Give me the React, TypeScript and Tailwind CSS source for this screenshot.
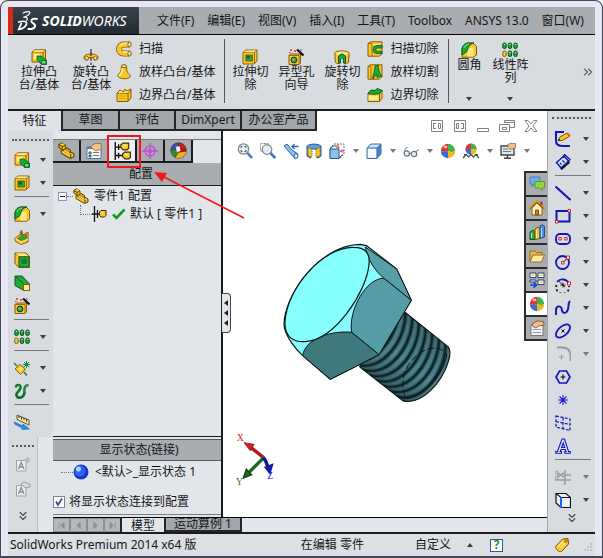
import React from 'react';
import { ChevronsDown, ChevronsRight } from 'lucide-react';

const G = '#1fa83c';
const Y = '#f6c928';
const YD = '#8a5a06';
const YL = '#fde98a';
const B = '#1414b8';

const icons: Record<string, React.ReactNode> = {
  extrude: (
    <>
      <path d="M1 3L4 .8H14.500V10L12 13H1Z" fill={Y} stroke={YD} />
      <path d="M1 3H12V13M12 3L14.500 1" fill="none" stroke={YD} />
      <path d="M1.500 3L4 1.300H14L12 3Z" fill={YL} />
      <path d="M3 5H9V10H3Z" fill={YL} />
      <path d="M6 7H10L15.500 11V15.500H10.500L6 11Z" fill={G} stroke="#0b5a1c" strokeWidth=".8" />
      <path d="M10.500 11.500H15V15H10.500Z" fill="#5fe070" stroke="#0b5a1c" strokeWidth=".8" />
    </>
  ),
  cut: (
    <>
      <path d="M1 3.500L4 1H15V12L12 15H1Z" fill={Y} stroke={YD} />
      <path d="M1 3.500H12.500V15M12.500 3.500L15 1" fill="none" stroke={YD} strokeWidth=".8" />
      <path d="M1.600 3.300L4 1.500H14L12 3.300Z" fill={YL} />
      <path d="M4 6H10.500V12H4Z" fill={G} stroke={YD} strokeWidth="1.200" />
      <path d="M4.500 6.500H8V9.500H4.500Z" fill="#0c6b22" />
    </>
  ),
  revolve: (
    <>
      <path d="M8 0V16" stroke="#111" strokeDasharray="3 1.500" />
      <path d="M1.500 10C-.5 7 3 5 8 5S16.500 7 14.500 10C13 12.500 9.500 11 10.500 8.500H5.500C6.500 11 3 12.500 1.500 10Z" fill={Y} stroke={YD} />
      <ellipse cx="3.700" cy="9" rx="1.700" ry="1.800" fill={YL} stroke={YD} strokeWidth=".8" />
      <ellipse cx="12.300" cy="9" rx="1.700" ry="1.800" fill={YL} stroke={YD} strokeWidth=".8" />
      <path d="M8 3V7" stroke="#111" />
    </>
  ),
  sweep: (
    <>
      <path d="M13.500 3.500H7.500A4.500 4.500 0 0 0 7.500 12.500H13.500" fill="none" stroke={YD} strokeWidth="6" />
      <path d="M13 3.500H7.500A4.500 4.500 0 0 0 7.500 12.500H13" fill="none" stroke={Y} strokeWidth="4.400" />
      <path d="M12.500 2.500H7.500A5 5 0 0 0 4 5M7 11H12" fill="none" stroke={YL} strokeWidth="1.300" />
      <ellipse cx="13.500" cy="3.500" rx="1.700" ry="2.500" fill={YL} stroke={YD} />
      <ellipse cx="13.500" cy="12.500" rx="1.700" ry="2.500" fill={YL} stroke={YD} />
    </>
  ),
  loft: (
    <>
      <path d="M5.500 2.500C5.500 7 4 9 1.500 11.500C2 15 14 16.500 14.500 11.500C11 9 10.500 6 10.500 2.500Z" fill={Y} stroke={YD} />
      <path d="M6.500 4C6.500 8 5 10 3.500 12" fill="none" stroke={YL} strokeWidth="2" />
      <ellipse cx="8" cy="2.200" rx="2.500" ry="1.500" fill={YL} stroke={YD} />
    </>
  ),
  boundary: (
    <>
      <path d="M1 6L4 3L7 5L9 2L11 4L15 2V11L12 14.500H1Z" fill={Y} stroke={YD} />
      <path d="M1 6C4 8 7 5 12 6.500V14.500M12 6.500L15 3" fill="none" stroke={YD} />
      <path d="M2 6L4.500 4L7.500 5.500L11 4.500L13.500 4L11.500 6C8 5 5 7 2 6Z" fill={YL} />
      <path d="M3 9H10M3 11.500H10" stroke="#d79a10" />
    </>
  ),
  hole: (
    <>
      <path d="M1 6.500L2.500 5H12.500V14L11 15.500H1Z" fill={Y} stroke={YD} />
      <path d="M1 6.500H11V15.500" fill="none" stroke={YD} strokeWidth=".8" />
      <circle cx="6" cy="11" r="2.900" fill={G} stroke="#2b2b2b" />
      <circle cx="5.500" cy="10.500" r="1" fill="#9af09a" />
      <path d="M9 .5L15.500 6.500" stroke="#111" strokeWidth="2.200" />
      <path d="M2 1H4M3 0V2M6 2H8M7 1V3M12 1H14M1 3.500H2.500" stroke="#d33" />
    </>
  ),
  revcut: (
    <>
      <path d="M.8 4.500C1 1 15 1 15.200 4.500L14.500 13C13.500 15 11 15 10.500 14.500V9L8 7L5.500 9V14.500C3 15 1.500 14 1.300 13Z" fill={Y} stroke={YD} />
      <path d="M1.500 4.500C2 2 14 2 14.500 4.500L11 6.500L8 5L5 6.500Z" fill={YL} />
      <path d="M4.500 7L8 4.800L11.500 7V14H9.500V10L8 8.800L6.500 10V14H4.500Z" fill={G} stroke="#0b5a1c" />
    </>
  ),
  sweepcut: (
    <>
      <path d="M1 2.500L4 .8H15V13L12 15.200H1Z" fill={Y} stroke={YD} />
      <path d="M1 2.500H5V15" fill="none" stroke={YD} strokeWidth=".8" />
      <path d="M6 3H13V4H6Z" fill={YL} />
      <path d="M15 4.500H10A3.500 3.500 0 0 0 10 12.500H15V10.300H10.500A1.300 1.300 0 0 1 10.500 7H15Z" fill={G} stroke="#0b5a1c" strokeWidth=".8" />
    </>
  ),
  loftcut: (
    <>
      <path d="M1 2.500L3 .8H15V13L12 15.200H1Z" fill={Y} stroke={YD} />
      <path d="M4 2.500V15M1 2.500H4" fill="none" stroke={YD} strokeWidth=".8" />
      <path d="M8 1.500H11.500C11.500 7 13 10 15 12L10 13.500L9.500 10L6 15C5 13 8 8 8 1.500Z" fill={G} stroke="#0b5a1c" strokeWidth=".8" />
    </>
  ),
  boundcut: (
    <>
      <path d="M1 6L4 3.500H15V11.500L12.500 14.500H1Z" fill={Y} stroke={YD} />
      <path d="M1 6.500H12.500V14.500" fill="none" stroke={YD} />
      <path d="M1.500 8.500H11.500V13.500H1.500Z" fill={YL} />
      <path d="M1 6.500C4 7.500 9 7.500 12.500 6.500L15.500 3.500L10 1.500L8 3.500L4 3Z" fill={G} stroke="#0b5a1c" />
    </>
  ),
  fillet: (
    <>
      <path d="M1 6L6 1H12L15.500 4.500V13L12.500 15.200H1Z" fill={Y} stroke={YD} />
      <path d="M1 8C1 3 4 1 8 1H13C9 2 6.500 5 6.500 9L1 13Z" fill={G} stroke="#0b5a1c" />
      <path d="M6.500 14.500V9.500C7 6.500 9 5.500 12.500 5.500V14.500Z" fill={YL} />
      <path d="M3 6C4 3.500 5.500 2.500 8 2" stroke="#7cf08a" fill="none" />
    </>
  ),
  pattern: (
    <>
      {[2.500, 8, 13.500].map((x) => (
        <g key={x}>
          <rect x={x - 1.700} y="1" width="3.400" height="5.500" rx="1.500" fill={G} stroke="#0a4c18" />
          <rect
            x={x - 1.700}
            y="9"
            width="3.400"
            height="5.500"
            rx="1.500"
            fill={x < 3 ? Y : G}
            stroke={x < 3 ? YD : '#0a4c18'}
          />
          <path d={`M${x - 0.7} 2.500H${x + 0.7}M${x - 0.7} 10.500H${x + 0.7}`} stroke="#a9f5ae" />
        </g>
      ))}
    </>
  ),
  rib: (
    <>
      <path d="M1 9L5.500 6L7.500 1L9 6L14 3V13L7 15.500L1 12Z" fill={Y} stroke={YD} />
      <path d="M7.500 2.500L9 7L12.500 5.500V9.500L8 12L3.500 9.500L6.500 7.500Z" fill={G} stroke={YD} strokeWidth=".8" />
      <path d="M1.500 9.500L7 12.800L14 10M7 12.800V15" stroke={YL} fill="none" />
    </>
  ),
  shell: (
    <>
      <path d="M1 1H12L15.500 4.500V15.500H5L1 11.500Z" fill={Y} stroke={YD} />
      <path d="M1 1L5 4.500H15.500M5 4.500V15.500" stroke={YD} fill="none" strokeWidth=".8" />
      <path d="M5 5H15V15H5Z" fill={G} stroke="#0b5a1c" strokeWidth=".8" />
      <path d="M7.500 7H13V12H7.500Z" fill="#0c7f28" />
      <path d="M2 1.500H11.500L14 4H5Z" fill={YL} />
    </>
  ),
  draft: (
    <>
      <path d="M1 1H8L15.500 9V15.500H10L1 10.500Z" fill={G} stroke="#0b5a1c" />
      <path d="M1 1L10 9.500H15.500M10 9.500V15" stroke="#0b5a1c" fill="none" />
      <path d="M9.500 9.500H15.500V15.500H9.500Z" fill={YL} stroke={YD} />
    </>
  ),
  refgeo: (
    <>
      <path d="M1 9L6 4.500L11.500 9L6.500 14.500Z" fill={Y} stroke={YD} />
      <path d="M4 9H9M6.500 6.500V12" stroke={YL} />
      <path d="M0 3L3 6M10 12L13 15.500" stroke="#178a2c" strokeWidth="1.500" />
      <path d="M12.500 1V8M9 4.500H16M10 2L15 7M15 2L10 7" stroke="#178a2c" />
    </>
  ),
  curve: (
    <>
      <path d="M2 4.500C2 1 7 1 6.500 5C6 8 1.500 9.500 2.500 12.500C4 16.500 10 15 10.500 9.500C10.500 6 10 2.500 14.500 2" stroke="#126e30" strokeWidth="2.600" fill="none" />
      <path d="M3 4C4 2 6 3 5.500 5M11 9C11 5 11.500 3 14 2" stroke="#5cc06c" fill="none" strokeWidth=".8" />
    </>
  ),
  measure: (
    <>
      <path d="M3 1L15 6V11L3 5.500Z" fill={YL} stroke="#555" />
      <path d="M5 2V4M7.500 3V5.500M10 4V6M12.500 5V7.500" stroke="#333" />
      <path d="M.5 8L9 12V10L15.500 15L8 15.500V14L.5 10Z" fill="#2a8fe8" stroke="#1763ad" strokeWidth=".6" />
    </>
  ),
  noteA: (
    <>
      <path d="M1.500 4.500H11V15H1.500Z" fill="#eee" stroke="#9da0a4" />
      <path d="M3.500 13L6.200 6.500L9 13M4.500 11H8" stroke="#8b8e92" strokeWidth="1.300" fill="none" />
      <path d="M12.500 1V7M9.500 4H15.500M10.500 2L14.500 6M14.500 2L10.500 6" stroke="#b0b3b6" />
    </>
  ),
  noteB: (
    <>
      <path d="M1.500 4.500H11V15H1.500Z" fill="#eee" stroke="#9da0a4" />
      <path d="M3.500 13L6.200 6.500L9 13M4.500 11H8" stroke="#8b8e92" strokeWidth="1.300" fill="none" />
      <path d="M6 3L9 1L15 3V6L10 7Z" fill="#d5d5d5" stroke="#9da0a4" />
    </>
  ),
  part: (
    <>
      <path d="M.8 2.500L3.500 .8L7 3V6.500L15 11V14L11.500 15.500L3 10.500V6.500L.8 5Z" fill={Y} stroke="#5d4300" />
      <path d="M4 8L8.500 5.500L11.500 7.500V10.500" fill="#d89b0a" stroke="#5d4300" />
      <path d="M1 2.500L4 4.500V7.500L12 12V15M4 4.500L6.500 3" stroke="#5d4300" fill="none" />
      <path d="M4 1.500L6 3M5.500 8L11.500 11.500" stroke={YL} />
    </>
  ),
  property: (
    <>
      <path d="M1 4H15V15.500H1Z" fill="#f6f8fb" stroke="#5673a8" />
      <path d="M1 4H15V6H1Z" fill="#4a78c8" />
      <path d="M3 9H5V11H3ZM3 12.500H5V14H3Z" fill="none" stroke="#355" />
      <path d="M7 9.500H13M7 12.500H13" stroke="#778" />
      <path d="M5 3L9 .5H15L15.500 6L10 8L6 5.500Z" fill="#f1c08c" stroke="#8a5a2c" strokeWidth=".7" />
    </>
  ),
  config: (
    <>
      <path d="M2 0V16M2 4.500H8M2 12H8M5 2V7M5 9.500V14.500" stroke="#111" strokeWidth="1.200" />
      <path d="M7 2.500L9 1H14V5.500L12.500 7H9L7 5Z" fill={Y} stroke="#3d2d00" />
      <path d="M8.500 10.500L10.500 9H15.500V13.500L14 15H10.500L8.500 13Z" fill={Y} stroke="#3d2d00" />
      <path d="M9 3H12M10.500 11H13" stroke={YL} strokeWidth="1.500" />
    </>
  ),
  target: (
    <>
      <circle cx="8" cy="8" r="5" fill="none" stroke="#c44bd6" strokeWidth="1.400" />
      <circle cx="8" cy="8" r="2" fill="none" stroke="#c44bd6" />
      <path d="M8 0V16M0 8H16" stroke="#c44bd6" strokeWidth="1.300" />
    </>
  ),
  ball: (
    <>
      <circle cx="8" cy="8" r="7.200" fill="#f2f2f2" />
      <path d="M8 8V.8A7.200 7.200 0 0 0 .8 8C3 9.500 6 9 8 8Z" fill="#e5342b" />
      <path d="M8 8V.8A7.200 7.200 0 0 1 15.200 8C13 9.500 10 9 8 8Z" fill="#3cb54a" />
      <path d="M8 8C6 9 3 9.500 .8 8A7.200 7.200 0 0 0 8 15.200Z" fill="#2e6fd8" />
      <path d="M8 8C10 9 13 9.500 15.200 8A7.200 7.200 0 0 1 8 15.200Z" fill="#f2b91d" />
      <ellipse cx="5.500" cy="4" rx="2" ry="1.400" fill="#fff" opacity=".65" />
    </>
  ),
  ballDark: (
    <>
      <circle cx="8" cy="8" r="7.300" fill="#a61414" stroke="#333" strokeWidth=".7" />
      <path d="M1 7A7 7 0 0 1 8 1L7 6Z" fill="#2356c6" />
      <path d="M8 1A7.200 7.200 0 0 1 15 7L9 6Z" fill="#c81e1e" />
      <path d="M.8 8L7 7L8 10L4 14A7 7 0 0 1 .8 8Z" fill="#2c8f3c" />
      <path d="M8 10L15.200 9A7.200 7.200 0 0 1 5 14.500Z" fill="#e6b41f" />
      <path d="M5.500 4.500L9 4L10 8.500L6.500 9.500Z" fill="#f5f5f5" />
    </>
  ),
  zoomFit: (
    <>
      <circle cx="6.500" cy="6" r="5.200" fill="#e6ecf2" stroke="#7d8894" strokeWidth="1.300" />
      <path d="M4 5V3.500H5.500M7.500 3.500H9V5M9 7V8.500H7.500M5.500 8.500H4V7" stroke="#4b5661" fill="none" />
      <path d="M10.500 10L15 15" stroke="#3c79c4" strokeWidth="2.600" />
    </>
  ),
  zoomArea: (
    <>
      <path d="M.5 .5H8V8H.5Z" fill="none" stroke="#888" strokeDasharray="2 1" />
      <circle cx="7" cy="6.500" r="4.800" fill="#e6ecf2" fillOpacity=".8" stroke="#7d8894" strokeWidth="1.200" />
      <path d="M10.500 10L15.200 15" stroke="#3c79c4" strokeWidth="2.600" />
    </>
  ),
  prevView: (
    <>
      <path d="M1 3L4 1L9 7L15 11L12 15.500L7 10Z" fill="#8dbfe8" stroke="#2c69a8" />
      <ellipse cx="13" cy="13" rx="2" ry="2.500" fill="#c9e4f8" stroke="#2c69a8" />
      <path d="M15.500 3.500H9M11.500 1L9 3.500L11.500 6" stroke="#2668c4" strokeWidth="1.300" fill="none" />
    </>
  ),
  section: (
    <>
      <path d="M1 3C4 .5 12 .5 15 3V13L11.500 15V6H4.500V15L1 13Z" fill="#5f9fe0" stroke="#24588f" />
      <path d="M2 4.500L6 6.500V14.500L2 12.500ZM10 6.500L14 4.500V12.500L10 14.500Z" fill={Y} stroke="#7a6200" strokeDasharray="1 1" />
    </>
  ),
  orient: (
    <>
      <path d="M5 1H15V11L11 15H1V5Z" fill="#fff" stroke="#777" strokeDasharray="2 1" />
      <path d="M1 6H10V15.500H1Z" fill="#8cc0ee" stroke="#24588f" />
      <path d="M1 6L4 3H8M10 15L13.500 11.500" fill="none" stroke="#24588f" />
      <path d="M9 1V5M7.500 4L9 5.500L10.500 4M15 8H12M13 6.500L11.500 8L13 9.500" stroke="#d22" fill="none" />
    </>
  ),
  display: (
    <>
      <path d="M1 5L5 1H15V11L11 15.500H1Z" fill="#cfe2f6" stroke="#3d6ea8" />
      <path d="M11 5L15 1V11L11 15Z" fill="#3f7fd0" />
      <path d="M2 6H10V14.500H2Z" fill="#f4f8fc" />
      <path d="M1 5H11V15.500M11 5L15 1" fill="none" stroke="#3d6ea8" />
    </>
  ),
  glasses: (
    <>
      <circle cx="3.800" cy="10.500" r="2.700" fill="#e6f0f6" stroke="#66727c" strokeWidth="1.200" />
      <circle cx="11" cy="11" r="2.700" fill="#e6f0f6" stroke="#66727c" strokeWidth="1.200" />
      <path d="M1.200 10C1.500 6 3 4.500 4.500 4.500M6.500 10.500H8.300M13.500 10C13.500 7 14.500 6.500 16 7.500" stroke="#66727c" fill="none" />
    </>
  ),
  scene: (
    <>
      <circle cx="8" cy="6" r="5.500" fill="#e5342b" />
      <path d="M8 .5A5.500 5.500 0 0 1 13.500 6H8Z" fill="#3cb54a" />
      <path d="M8 6H13.500A5.500 5.500 0 0 1 8 11.500Z" fill="#f2b91d" />
      <path d="M8 6V11.500A5.500 5.500 0 0 1 2.500 6Z" fill="#2e6fd8" />
      <path d="M0 15L3 11.500L5.500 14L8 11.500L10.500 14L13 11.500L16 15M1 11.500H4M12 11.500H15" stroke="#444" strokeWidth="1.200" fill="none" />
    </>
  ),
  screen: (
    <>
      <path d="M1 3H14V12H1Z" fill="#dfe8ee" stroke="#444" strokeWidth="1.400" />
      <path d="M3 6H8M3 8.500H11" stroke="#6d7b86" />
      <path d="M4 15.300H11M7.500 12V15" stroke="#444" strokeWidth="1.500" />
      <path d="M7 2L10 .5H15.500V5L10 6.500Z" fill="#f1c08c" stroke="#8a5a2c" strokeWidth=".7" />
    </>
  ),
  chat: (
    <>
      <path d="M1 1H11V8H5L3 10.500V8H1Z" fill="#69aee6" stroke="#4682b8" />
      <path d="M6 5.500H15.500V12H13V14.500L10.500 12H6Z" fill="#8fd44a" stroke="#5a9d26" />
    </>
  ),
  home: (
    <>
      <path d="M3 8V15H13V8L8 3Z" fill="#fff4c8" stroke="#8a5a06" />
      <path d="M.5 8.500L8 1L15.500 8.500" stroke="#d79a10" strokeWidth="2" fill="none" />
      <path d="M.5 9.500L8 2.200L15.500 9.500" stroke="#8a4a06" fill="none" strokeWidth=".7" />
      <path d="M12.500 1.500V5" stroke="#b3261a" strokeWidth="2" />
      <path d="M6.500 10H9.500V15H6.500Z" fill="#c97a22" stroke="#8a4a06" />
    </>
  ),
  library: (
    <>
      <path d="M1 8L4 6L6 8V15.500H1Z" fill="#2fa64a" stroke="#0b5a1c" />
      <path d="M6 5L9 3L11 5V14.500L6 15.500Z" fill="#f2c433" stroke="#7a5a00" />
      <path d="M11 2L13.500 .8L15.500 2.500V13L11 14.500Z" fill="#4a90e0" stroke="#1a4e90" />
      <path d="M2.500 9V14M7.500 6V14M12.500 4V13" stroke="#fff" opacity=".7" />
    </>
  ),
  folder: (
    <>
      <path d="M1 13V3H6L7.500 4.500H13V7" fill="#e8bb4e" stroke="#9a6c10" />
      <path d="M1 14L4 7H15.500L12.500 14Z" fill="#fde9a6" stroke="#9a6c10" />
    </>
  ),
  palette: (
    <>
      <path d="M1 1H7V5.500H1ZM9 1H15V5.500H9ZM9 8H15V12.500H9ZM1 8H7V10H1Z" fill="#fff" stroke="#28406e" />
      <path d="M2.500 3.300H5.500M10.500 3.300H13.500M10.500 10.300H13.500" stroke={Y} strokeWidth="1.600" />
      <path d="M1 13H7M4.500 10.500L7.500 13L4.500 15.500" stroke="#1645c8" strokeWidth="1.600" fill="none" />
    </>
  ),
  custom: (
    <>
      <path d="M2 5H14V15.500H2Z" fill="#f4f4f4" stroke="#777" />
      <path d="M4 9.500H12M4 12.500H12" stroke="#999" />
      <path d="M3 4L8 1L14.500 1.500L15 5L10 6L7 8L4 6.500Z" fill="#f1c08c" stroke="#7a4a1c" strokeWidth=".8" />
    </>
  ),
  sketch: (
    <>
      <path d="M9 1H1V10C1 14 4 15 8 15H15" stroke={B} strokeWidth="2" fill="none" />
      <path d="M3 9.500L5 6L12 2L14.500 5.500L7 9.500Z" fill={Y} stroke="#8a4a06" />
      <path d="M11.500 2L13 1.500L15.500 4.500L14 6Z" fill="#e0574c" />
      <path d="M3 10L5.500 9.500L4 7.500Z" fill="#222" />
    </>
  ),
  smartdim: (
    <>
      <path d="M1.500 8.500L9 2L13.500 7L6 14Z" fill="#cfe2fa" stroke={B} strokeWidth="1.400" />
      <path d="M8 4L9.500 .5L15 5.500L13 7.500M5 9L6.500 10.500M7.500 6.500L9.500 8.500" stroke={B} strokeWidth="1.300" fill="none" />
      <path d="M6 15.500L14.500 8" stroke="#111" strokeWidth="1.800" />
    </>
  ),
  line: <path d="M.5 1.500L15.500 15" stroke={B} strokeWidth="2" />,
  rect: (
    <>
      <path d="M1.500 3H14.500V13.500H1.500Z" fill="none" stroke={B} strokeWidth="2" />
      <path d="M13 1.500H15.500V4H13ZM.5 12.500H3V15H.5Z" fill="#fff" stroke="#c22" />
    </>
  ),
  slot: (
    <>
      <rect x="1" y="3" width="14" height="10" rx="4" fill="none" stroke={B} strokeWidth="1.800" />
      <path d="M3.800 6.500H6.200V9H3.800ZM9.800 6.500H12.200V9H9.800Z" fill="#fff" stroke="#c22" />
    </>
  ),
  circle: (
    <>
      <circle cx="7.500" cy="8.500" r="6.500" fill="none" stroke={B} strokeWidth="1.800" />
      <path d="M8 8.500L13 3.500" stroke="#111" />
      <path d="M6.500 7.500H9V10H6.500ZM11.500 2H14.500V5H11.500Z" fill="#fff" stroke="#c22" />
    </>
  ),
  arc: (
    <>
      <path d="M2 5A7 7 0 0 1 14 7" fill="none" stroke={B} strokeWidth="1.800" />
      <path d="M1.500 8A6.500 6.500 0 1 0 14 9" fill="none" stroke="#111" strokeWidth="1.800" strokeDasharray="2 2.500" />
      <path d="M4 4.500L10 10M5.500 8H10.500M8 5.500V10.500" stroke="#111" strokeWidth=".9" />
      <path d="M12.500 5H15.500V8H12.500Z" fill="#fff" stroke="#c22" />
    </>
  ),
  spline: <path d="M1 15V10C1 6 6 5 6.500 8.500C7 12.500 9 14 11.500 12C15 9 12 4 15 1" stroke={B} strokeWidth="1.900" fill="none" />,
  ellipse: (
    <>
      <ellipse cx="8" cy="8" rx="8.500" ry="4.600" transform="rotate(-42 8 8)" fill="none" stroke={B} strokeWidth="1.800" />
      <path d="M6.500 6.500L9.500 9.500M9.500 6.500L6.500 9.500" stroke="#111" />
    </>
  ),
  arcGrey: (
    <>
      <path d="M2 1.500H7C13 1.500 15.500 5 15.500 10V15" stroke="#9a9da0" strokeWidth="1.800" fill="none" />
      <path d="M4 11H9M6.500 8.500V13.500" stroke="#9a9da0" />
    </>
  ),
  polygon: (
    <>
      <path d="M4.500 2H11.500L15 8L11.500 14H4.500L1 8Z" fill="none" stroke={B} strokeWidth="1.700" />
      <path d="M5.500 8H10.500M8 5.500V10.500" stroke="#111" strokeWidth="1.200" />
    </>
  ),
  star: <path d="M8 3V13M3 8H13M4.500 4.500L11.500 11.500M11.500 4.500L4.500 11.500" stroke="#1a1adf" strokeWidth="1.100" />,
  plane: <path d="M1 1L15 4V15.500L1 12ZM1 6.500L15 9.500M8 2.500V14" stroke={B} strokeWidth="1.200" strokeDasharray="3 1.500" fill="none" />,
  textA: <path d="M.8 15.200V13.500H2.500L7 1H9.500L13.500 13.500H15.200V15.200H9.800V13.500H11L10.200 11.500H6L5.200 13.500H6.500V15.200ZM6.600 9.500H9.700L8.200 5Z" fill="#dfe4fb" stroke={B} strokeWidth="1.100" />,
  trim: (
    <>
      <path d="M0 11H16M10 1V16M10 6H16M2 4L9 8M2 8L9 4" stroke="#9b9ea1" strokeWidth="1.500" />
      <circle cx="1.800" cy="3.500" r="1.500" fill="none" stroke="#9b9ea1" />
      <circle cx="1.800" cy="8.500" r="1.500" fill="none" stroke="#9b9ea1" />
    </>
  ),
  convert: (
    <>
      <path d="M1 1.500H11L15.500 5.500V15.500H6L1 11Z" fill="#eef1f4" stroke="#111" strokeWidth="1.200" />
      <path d="M1 1.500L6 5.500H15.500" stroke="#111" strokeWidth="1.200" fill="none" />
      <path d="M6 5V16" stroke="#1b62ff" strokeWidth="2" />
    </>
  ),
};

function Icon({ name, size = 16 }: { name: string; size?: number }) {
  return (
    <svg width={size} height={size} viewBox="0 0 16 16" className="shrink-0" aria-hidden="true">
      {icons[name]}
    </svg>
  );
}

function Caret({ up = false, grey = false }: { up?: boolean; grey?: boolean }) {
  return (
    <svg width="6" height="4" viewBox="0 0 6 4" className="shrink-0" aria-hidden="true">
      <path d={up ? 'M0 4L3 0L6 4Z' : 'M0 0H6L3 4Z'} fill={grey ? '#75787c' : '#3c3f42'} />
    </svg>
  );
}

const menus = ['文件(F)', '编辑(E)', '视图(V)', '插入(I)', '工具(T)', 'Toolbox', 'ANSYS 13.0', '窗口(W)'];

function MenuBar() {
  return (
    <header className="flex h-7 items-stretch border-b border-black bg-[#a9adb1]">
      <div className="flex w-[131px] shrink-0 items-center border-l-[5px] border-[#d92a1c] bg-gradient-to-b from-[#3a434c] to-[#222a31] pl-1 text-white">
        <svg width="22" height="22" viewBox="0 0 66 66" fill="none" stroke="#fff" aria-hidden="true">
          <path d="M17 10C26 4 42 2 38 10C35 16 27 20 19 22C31 20 34 25 28 33" strokeWidth="3.500" />
          <path d="M3 37C20 31 32 34 28 43C24 52 14 57 5 58L14 38" strokeWidth="5" />
          <path d="M62 27C50 24 42 28 43 34C44 40 57 42 54 49C51 57 42 58 32 57" strokeWidth="6" />
        </svg>
        <span className="pl-[3px] text-sm leading-4 italic">
          <b>SOLID</b>WORKS
        </span>
      </div>
      <nav className="flex min-w-0 flex-1 items-center justify-between pr-[11px] pl-[18px] whitespace-nowrap">
        {menus.map((m) => (
          <button key={m} type="button">
            {m}
          </button>
        ))}
      </nav>
    </header>
  );
}

function BigButton({ icon, label, width, caret }: { icon: string; label: string; width: string; caret?: boolean }) {
  return (
    <button type="button" className={`flex shrink-0 flex-col items-center ${width} ${caret ? 'pt-[7px]' : 'pt-[14px]'}`}>
      <Icon name={icon} />
      <span className={`w-[42px] leading-[13px] break-all ${caret ? 'h-[39px]' : ''}`}>{label}</span>
      {caret && <Caret />}
    </button>
  );
}

function ButtonStack({ items }: { items: [string, string][] }) {
  return (
    <div className="flex shrink-0 flex-col pt-[2px]">
      {items.map(([icon, label]) => (
        <button key={label} type="button" className="flex h-[23px] items-center gap-[7px] whitespace-nowrap">
          <Icon name={icon} />
          {label}
        </button>
      ))}
    </div>
  );
}

function Ribbon() {
  return (
    <section className="flex h-[76px] border-b-2 border-[#1c1c1e] bg-[#d8dbdf] pl-1">
      <BigButton icon="extrude" label="拉伸凸台/基体" width="w-[54px]" />
      <BigButton icon="revolve" label="旋转凸台/基体" width="w-[50px]" />
      <ButtonStack items={[['sweep', '扫描'], ['loft', '放样凸台/基体'], ['boundary', '边界凸台/基体']]} />
      <div className="mt-1 mr-[2px] ml-[9px] h-16 w-px bg-[#55585c]" />
      <BigButton icon="cut" label="拉伸切除" width="w-[46px]" />
      <BigButton icon="hole" label="异型孔向导" width="w-[46px]" />
      <BigButton icon="revcut" label="旋转切除" width="w-[46px]" />
      <div className="w-[2px]" />
      <ButtonStack items={[['sweepcut', '扫描切除'], ['loftcut', '放样切割'], ['boundcut', '边界切除']]} />
      <div className="mt-1 ml-[10px] h-16 w-px bg-[#55585c]" />
      <BigButton icon="fillet" label="圆角" width="w-[40px]" caret />
      <BigButton icon="pattern" label="线性阵列" width="w-[42px]" caret />
      <button type="button" aria-label="更多" className="ml-auto text-[#55585c]">
        <ChevronsRight size={14} strokeWidth={2} />
      </button>
    </section>
  );
}

const ribbonTabs: [string, string][] = [
  ['特征', 'w-[55px]'],
  ['草图', 'w-[57px]'],
  ['评估', 'w-[56px]'],
  ['DimXpert', 'w-[66px]'],
  ['办公室产品', 'w-[75px]'],
];

function WindowControls() {
  return (
    <div className="flex h-[14px] gap-[9px] text-[#7e8185]">
      {['左', '右'].map((side, i) => (
        <button key={side} type="button" aria-label={`${side}窗格`}>
          <svg width="14" height="14" viewBox="0 0 14 14" fill="none" stroke="currentColor">
            <path d="M1.500 1.500H12.500V12.500H1.500Z" />
            <path d={i ? 'M3.500 4.500H5.500V9.500H3.500ZM8 4.500H10.500M8 9.500H10.500M10.500 4V10' : 'M8.500 4.500H10.500V9.500H8.500ZM3.500 4.500H6M3.500 9.500H6M3.500 4V10'} />
          </svg>
        </button>
      ))}
      <button type="button" aria-label="最小化">
        <svg width="14" height="14" viewBox="0 0 14 14" fill="none" stroke="currentColor">
          <path d="M1.500 9.500H12.500V12.500H1.500Z" />
        </svg>
      </button>
      <button type="button" aria-label="还原">
        <svg width="16" height="14" viewBox="0 0 16 14" fill="none" stroke="currentColor">
          <path d="M5.500 4V1.500H15.500V8.500H11M.5 5.500H10.500V12.500H.5ZM3.500 8.500H7.500V10.500H3.500ZM6 3.500H15" />
        </svg>
      </button>
      <button type="button" aria-label="关闭">
        <svg width="14" height="14" viewBox="0 0 14 14" fill="none" stroke="currentColor">
          <path d="M1 1.500H4L7 5L10 1.500H13L9 7L13 12.500H10L7 9L4 12.500H1L5 7Z" />
        </svg>
      </button>
    </div>
  );
}

function TabRow() {
  return (
    <div className="relative z-10 flex h-5 bg-white">
      <div role="tablist" className="flex">
        {ribbonTabs.map(([label, w], i) => (
          <button
            key={label}
            type="button"
            role="tab"
            aria-selected={i === 0}
            className={`${w} border-r-2 leading-4 whitespace-nowrap ${
              i === 0 ? 'border-[#242526] bg-[#dfe2e6]' : 'border-b-2 border-[#242526] bg-[#a3a6aa]'
            }`}
          >
            {label}
          </button>
        ))}
      </div>
      <div className="flex flex-1 justify-end pt-2 pr-[9px]">
        <WindowControls />
      </div>
    </div>
  );
}

function Grip({ width }: { width: string }) {
  return <div className={`${width} h-0 border-t-2 border-dotted border-[#55585c]`} />;
}

interface Tool {
  icon: string;
  label: string;
  caret?: boolean;
  grey?: boolean;
  sep?: boolean;
}

const leftTools: Tool[] = [
  { icon: 'extrude', label: '拉伸凸台', caret: true },
  { icon: 'cut', label: '拉伸切除', caret: true, sep: true },
  { icon: 'fillet', label: '圆角', caret: true },
  { icon: 'rib', label: '筋' },
  { icon: 'shell', label: '抽壳' },
  { icon: 'draft', label: '拔模' },
  { icon: 'hole', label: '异型孔向导', sep: true },
  { icon: 'pattern', label: '线性阵列', caret: true, sep: true },
  { icon: 'refgeo', label: '参考几何体', caret: true },
  { icon: 'curve', label: '曲线', caret: true, sep: true },
  { icon: 'measure', label: '测量' },
];

const rightTools: Tool[] = [
  { icon: 'sketch', label: '草图绘制', caret: true },
  { icon: 'smartdim', label: '智能尺寸', caret: true, sep: true },
  { icon: 'line', label: '直线', caret: true },
  { icon: 'rect', label: '矩形', caret: true },
  { icon: 'slot', label: '槽口', caret: true },
  { icon: 'circle', label: '圆', caret: true },
  { icon: 'arc', label: '圆弧', caret: true },
  { icon: 'spline', label: '样条曲线', caret: true },
  { icon: 'ellipse', label: '椭圆', caret: true },
  { icon: 'arcGrey', label: '绘制圆角', caret: true, grey: true },
  { icon: 'polygon', label: '多边形' },
  { icon: 'star', label: '点' },
  { icon: 'plane', label: '基准面' },
  { icon: 'textA', label: '文字', sep: true },
  { icon: 'trim', label: '剪裁实体', caret: true, grey: true },
  { icon: 'convert', label: '转换实体引用', caret: true },
];

function ToolList({ tools, gap }: { tools: Tool[]; gap: string }) {
  return (
    <>
      {tools.map((t) => (
        <React.Fragment key={t.icon}>
          <button type="button" aria-label={t.label} className={`flex h-[23px] w-full items-center ${gap}`}>
            <Icon name={t.icon} />
            {t.caret && <Caret grey={t.grey} />}
          </button>
          {t.sep && <div className="mt-[2px] mr-1 mb-[5px] h-px bg-[#77797d]" />}
        </React.Fragment>
      ))}
    </>
  );
}

function LeftToolbar() {
  return (
    <aside className="flex w-[45px] shrink-0 flex-col bg-[#d8dbdf]">
      <div className="px-1 pt-2 pb-[7px]">
        <Grip width="w-full" />
      </div>
      <div className="pl-[6px]">
        <ToolList tools={leftTools} gap="gap-[10px]" />
      </div>
      <div className="mt-1 flex flex-1 flex-col bg-[#e2e6eb]">
        <div className="flex w-[30px] flex-1 flex-col items-center border-r border-[#b9bcc0] bg-[#d8dbdf] pt-2">
          <Grip width="w-[22px]" />
          <button type="button" aria-label="注解" className="mt-1 flex h-[26px] items-center">
            <Icon name="noteA" />
          </button>
          <button type="button" aria-label="注解属性" className="flex h-[23px] items-center">
            <Icon name="noteB" />
          </button>
          <button type="button" aria-label="更多" className="mt-[9px] text-[#44474b]">
            <ChevronsDown size={14} />
          </button>
        </div>
      </div>
    </aside>
  );
}

function RightToolbar() {
  return (
    <aside className="flex w-12 shrink-0 flex-col border-l border-[#a4a8ad] bg-[#d8dbdf]">
      <div className="px-1 pt-[6px] pb-2">
        <Grip width="w-full" />
      </div>
      <div className="pl-[7px]">
        <ToolList tools={rightTools} gap="gap-[12px]" />
      </div>
      <button type="button" aria-label="更多" className="self-center text-[#44474b]">
        <ChevronsDown size={14} />
      </button>
    </aside>
  );
}

const managerTabs = [
  { icon: 'part', label: 'FeatureManager', size: 17 },
  { icon: 'property', label: 'PropertyManager', size: 16 },
  { icon: 'config', label: 'ConfigurationManager', size: 18 },
  { icon: 'target', label: 'DimXpertManager', size: 16 },
  { icon: 'ballDark', label: 'DisplayManager', size: 17 },
];

function ConfigurationPanel() {
  return (
    <section className="flex w-[170px] shrink-0 flex-col border-r-2 border-[#1c1c1e] bg-[#e2e6eb]">
      <div role="tablist" className="mt-2 flex h-6 border-t border-[#77797d]">
        {managerTabs.map((t, i) => (
          <button
            key={t.icon}
            type="button"
            role="tab"
            aria-label={t.label}
            aria-selected={i === 2}
            className={`flex w-7 items-center justify-center border-r-2 border-b-2 border-[#1c1c1e] ${i === 2 ? 'bg-[#eef0f3]' : 'bg-[#a9adb1]'}`}
          >
            <Icon name={t.icon} size={t.size} />
          </button>
        ))}
      </div>
      <h2 className="h-[23px] border-b border-[#1c1c1e] bg-[#a9adb1] pl-2 text-center leading-[22px]">配置</h2>
      <ul className="pt-[1px] pl-[5px]">
        <li className="flex h-[18px] items-center">
          <button type="button" aria-label="折叠" className="flex h-[9px] w-[9px] items-center justify-center border border-[#8a97a8] bg-white">
            <span className="h-px w-[5px] bg-[#223]" />
          </button>
          <span className="w-[6px] border-t border-dotted border-[#777]" />
          <Icon name="part" />
          <span className="pl-[5px]">零件1 配置</span>
        </li>
        <li className="flex h-[18px] items-center pl-[22px]">
          <span className="-mt-2 h-[10px] w-3 border-b border-l border-dotted border-[#777]" />
          <svg width="15" height="16" viewBox="0 0 15 16" aria-hidden="true">
            <path d="M2.500 0V16M5.500 4V12M0 8H8" stroke="#111" strokeWidth="1.300" />
            <path d="M7.500 6L9 4.500H14V9.500L12.500 11H9L7.500 9.500Z" fill={Y} stroke="#3d2d00" />
            <path d="M9 6.500H12" stroke={YL} />
          </svg>
          <svg width="14" height="12" viewBox="0 0 14 12" className="ml-[5px]" aria-hidden="true">
            <path d="M1 6.500L4.500 10L12.500 1.500" stroke="#139a22" strokeWidth="2.600" fill="none" />
          </svg>
          <span className="pl-1">默认 [ 零件1 ]</span>
        </li>
      </ul>
      <div className="mt-auto border-t border-[#1c1c1e] pt-[2px]">
        <h2 className="h-[22px] border-y border-[#55585c] bg-[#a9adb1] pl-1 text-center leading-5">显示状态(链接)</h2>
        <div className="flex h-[22px] items-center pl-[8px]">
          <span className="w-3 border-t border-dotted border-[#777]" />
          <svg width="16" height="16" viewBox="0 0 16 16" aria-hidden="true">
            <circle cx="8" cy="8" r="7.500" fill="#1436c4" />
            <circle cx="7" cy="7" r="5.500" fill="#2f63f0" />
            <circle cx="5.500" cy="5" r="2.500" fill="#b9d0ff" />
          </svg>
          <span className="pl-[6px] whitespace-nowrap">&lt;默认&gt;_显示状态 1</span>
        </div>
        <label className="mt-[6px] mb-[2px] flex h-[26px] items-center gap-1 border-b border-[#77808c] whitespace-nowrap">
          <span className="relative h-3 w-3">
            <input type="checkbox" defaultChecked className="peer block h-3 w-3 appearance-none border border-[#7c8288] bg-white" />
            <svg viewBox="0 0 12 12" className="pointer-events-none absolute inset-0 hidden peer-checked:block">
              <path d="M3 5.500L5 9L9 2.500" stroke="#3450a0" strokeWidth="1.700" fill="none" />
            </svg>
          </span>
          将显示状态连接到配置
        </label>
      </div>
    </section>
  );
}

const viewTools: Tool[] = [
  { icon: 'zoomFit', label: '整屏显示全图' },
  { icon: 'zoomArea', label: '局部放大' },
  { icon: 'prevView', label: '上一视图' },
  { icon: 'section', label: '剖面视图' },
  { icon: 'orient', label: '视图定向', caret: true },
  { icon: 'display', label: '显示样式', caret: true },
  { icon: 'glasses', label: '隐藏/显示项目', caret: true },
  { icon: 'ball', label: '编辑外观' },
  { icon: 'scene', label: '应用布景', caret: true },
  { icon: 'screen', label: '视图设定', caret: true },
];

const taskTabs = [
  { icon: 'chat', label: '论坛' },
  { icon: 'home', label: '资源' },
  { icon: 'library', label: '设计库' },
  { icon: 'folder', label: '文件探索器' },
  { icon: 'palette', label: '视图调色板' },
  { icon: 'ball', label: '外观' },
  { icon: 'custom', label: '自定义属性' },
];

function Bolt() {
  const threads = Array.from({ length: 9 }, (_, i) => i - 1);
  return (
    <g strokeLinejoin="round">
      <clipPath id="shank">
        <path d="M405 262L534 365C543 375 540 395 535 410C515 475 455 540 400 528L268 425L300 300Z" />
      </clipPath>
      <linearGradient id="shade" x1="440" y1="290" x2="310" y2="460" gradientUnits="userSpaceOnUse">
        <stop offset="0" stopColor="#3d6c74" />
        <stop offset="0.550" stopColor="#4f878e" />
        <stop offset="1" stopColor="#2f5c62" />
      </linearGradient>
      <g clipPath="url(#shank)">
        <path d="M200 200H600V570H200Z" fill="url(#shade)" />
        {threads.map((t) => (
          <g key={t} transform={`translate(${t * 20} ${t * 15.800})`} fill="none">
            <path d="M406 252C415 337 338 446 258 418" stroke="#2f5a60" strokeWidth="14" />
            <path d="M406 252C415 337 338 446 258 418" stroke="#1e3b40" strokeWidth="9" />
            <path d="M406 252C415 337 338 446 258 418" stroke="#0f1e21" strokeWidth="4" />
          </g>
        ))}
      </g>
      <path d="M405 262L534 365C543 375 540 395 535 410C515 475 455 540 400 528L268 425" fill="none" stroke="#0b1517" strokeWidth="3.500" />
      <path d="M530 385C528 440 455 530 398 520" fill="none" stroke="#0b1517" strokeWidth="3" />
      <path d="M520 378C500 360 450 368 415 420C395 455 395 490 405 512" fill="none" stroke="#0b1517" strokeWidth="3" strokeDasharray="22 7" />
      <path d="M42 300C42 210 150 60 270 58L290 62L380 132L424 226L327 389L181 463L98 392C80 375 45 335 42 300Z" fill="#86fbfd" stroke="#0b1517" strokeWidth="3.500" />
      <path d="M286 66L380 132L424 226L342 160C318 140 292 105 286 66Z" fill="#57a0a9" stroke="#0b1517" strokeWidth="3" />
      <path d="M342 160L424 226L327 389L245 322C234 255 290 158 342 160Z" fill="#569ca6" stroke="#0b1517" strokeWidth="3" />
      <path d="M245 322L327 389L181 463L98 392C106 338 190 316 245 322Z" fill="#3f797c" stroke="#0b1517" strokeWidth="3" />
      <path d="M45 290C50 190 160 65 250 67C293 67 300 92 297 118C290 200 195 345 105 350C60 352 43 325 45 290Z" fill="#86ffff" stroke="#0b1517" strokeWidth="3.500" />
    </g>
  );
}

function Triad() {
  return (
    <g>
      <path d="M790 82L752 52" stroke="#b81420" strokeWidth="10" />
      <path d="M732 38L763 43L751 62Z" fill="#d31c28" stroke="#7a0c14" strokeWidth="2" />
      <path d="M790 84L748 126" stroke="#1d6a2a" strokeWidth="10" />
      <path d="M730 144L739 118L755 134Z" fill="#1d6a2a" stroke="#0e4418" strokeWidth="4" />
      <path d="M790 82C797 92 800 98 803 108" stroke="#14148e" strokeWidth="10" fill="none" />
      <path d="M810 130L795 112L818 103Z" fill="#1a1ac4" stroke="#14148e" strokeWidth="4" />
      <g fontFamily="Liberation Serif, serif" fontSize="28">
        <text x="711" y="34" fill="#e01020">X</text>
        <text x="708" y="166" fill="#0c7a1c">Y</text>
        <text x="802" y="148" fill="#1414e0">Z</text>
      </g>
    </g>
  );
}

function Viewport() {
  return (
    <section className="relative min-w-0 flex-1 bg-white">
      <svg width="324" height="385" viewBox="0 0 324 385" className="block max-w-full" role="img" aria-label="螺栓模型">
        <g transform="translate(47 94) scale(.3333)">
          <Bolt />
        </g>
        <g transform="translate(-223 299) scale(.3333)">
          <Triad />
        </g>
      </svg>
      <div className="absolute top-3 left-[14px] flex items-center gap-[7px]">
        {viewTools.map((t) => (
          <button key={t.icon} type="button" aria-label={t.label} className="flex items-center gap-2">
            <Icon name={t.icon} />
            {t.caret && <Caret grey />}
          </button>
        ))}
      </div>
      <div role="tablist" className="absolute top-10 right-0 flex w-[23px] flex-col border-t-2 border-l-2 border-[#2c2e30]">
        {taskTabs.map((t) => (
          <button
            key={t.icon}
            type="button"
            role="tab"
            aria-label={t.label}
            className={`flex h-6 items-center justify-center border-b-2 border-[#2c2e30] ${t.icon === 'ball' ? 'bg-white' : 'bg-[#a9adb1]'}`}
          >
            <Icon name={t.icon} />
          </button>
        ))}
      </div>
      <button
        type="button"
        aria-label="折叠面板"
        className="absolute top-[162px] -left-px flex h-10 w-[9px] flex-col items-center justify-around rounded-r-sm border border-l-0 border-[#44474b] bg-[#e2e6eb] py-1"
      >
        {[0, 1, 2].map((i) => (
          <svg key={i} width="4" height="6" viewBox="0 0 4 6">
            <path d="M4 0V6L0 3Z" fill="#222" />
          </svg>
        ))}
      </button>
    </section>
  );
}

function BottomTabs() {
  return (
    <div className="flex h-[15px] border-t border-black bg-[#e2e6eb] leading-[13px]">
      <div className="flex w-[67px]">
        {['M5 4V11M11 4L7 7.500L11 11Z', 'M10 4L6 7.500L10 11Z', 'M6 4L10 7.500L6 11Z', 'M5 4L9 7.500L5 11ZM11 4V11'].map((d) => (
          <button key={d} type="button" aria-label="翻页" className="border border-[#8b8e92] bg-[#b4b7bb]">
            <svg width="15" height="13" viewBox="0 0 16 15">
              <path d={d} fill="#8b8e92" stroke="#8b8e92" />
            </svg>
          </button>
        ))}
      </div>
      <button type="button" className="w-[46px] border-x-2 border-[#242526] bg-[#e2e6eb]">
        模型
      </button>
      <button type="button" className="w-[76px] border-r-2 border-b-2 border-[#242526] bg-[#a3a6aa] leading-3 whitespace-nowrap">
        运动算例 1
      </button>
    </div>
  );
}

function StatusBar() {
  return (
    <footer className="flex h-6 items-center border-t-2 border-[#1c1c1e] bg-[#dcdfe4] pl-[2px] whitespace-nowrap">
      <span>SolidWorks Premium 2014 x64 版</span>
      <div className="ml-auto flex items-center">
        <span className="mr-[51px]">在编辑 零件</span>
        <button type="button" className="mr-[17px] flex items-center gap-4">
          自定义
          <Caret up />
        </button>
        <button type="button" aria-label="帮助" className="mr-[51px] flex h-[13px] w-[13px] items-center justify-center border border-[#2d5f86] bg-white text-xs leading-3 font-bold text-[#12982a]">
          ?
        </button>
        <svg width="16" height="16" viewBox="0 0 16 16" aria-hidden="true">
          <path d="M1.500 9.500L8.500 2L14 1.500L14.500 7L7.500 14.500C5 15.500 1 12 1.500 9.500Z" fill={Y} stroke="#8a4a06" />
          <path d="M4 9.500L9 4.500M6 11.500L11 6.500" stroke={YL} strokeWidth="1.500" />
          <circle cx="12" cy="4" r="1.200" fill="#fff" stroke="#8a4a06" />
        </svg>
        <svg width="10" height="10" viewBox="0 0 10 10" className="mr-[2px] ml-[13px] self-end" fill="#bfc2c7" aria-hidden="true">
          <path d="M7 0H9V2H7ZM4 3H6V5H4ZM7 3H9V5H7ZM1 6H3V8H1ZM4 6H6V8H4ZM7 6H9V8H7Z" />
        </svg>
      </div>
    </footer>
  );
}

export default function App() {
  return (
    <div className="relative flex min-h-screen flex-col rounded-t-lg border-x border-t border-b-2 border-[#464757] bg-[#e6e7f2] px-[7px] pt-[6px] font-['Noto_Sans','Noto_Sans_CJK_SC',sans-serif] text-xs text-[#151617]">
      <MenuBar />
      <Ribbon />
      <main className="flex flex-1">
        <div className="flex min-w-0 flex-1 flex-col">
          <TabRow />
          <div className="flex flex-1">
            <LeftToolbar />
            <div className="flex min-w-0 flex-1 flex-col">
              <div className="flex flex-1">
                <ConfigurationPanel />
                <Viewport />
              </div>
              <BottomTabs />
            </div>
          </div>
        </div>
        <RightToolbar />
      </main>
      <StatusBar />
      <svg width="150" height="100" viewBox="0 0 150 100" className="pointer-events-none absolute top-[130px] left-[103px]" aria-hidden="true">
        <path d="M4 5H36V36H4Z" fill="none" stroke="#f01818" strokeWidth="2" />
        <path d="M140 87L60 46" stroke="#f01818" strokeWidth="1.500" />
        <path d="M50 41L63 42L58 51Z" fill="#f01818" />
      </svg>
    </div>
  );
}
